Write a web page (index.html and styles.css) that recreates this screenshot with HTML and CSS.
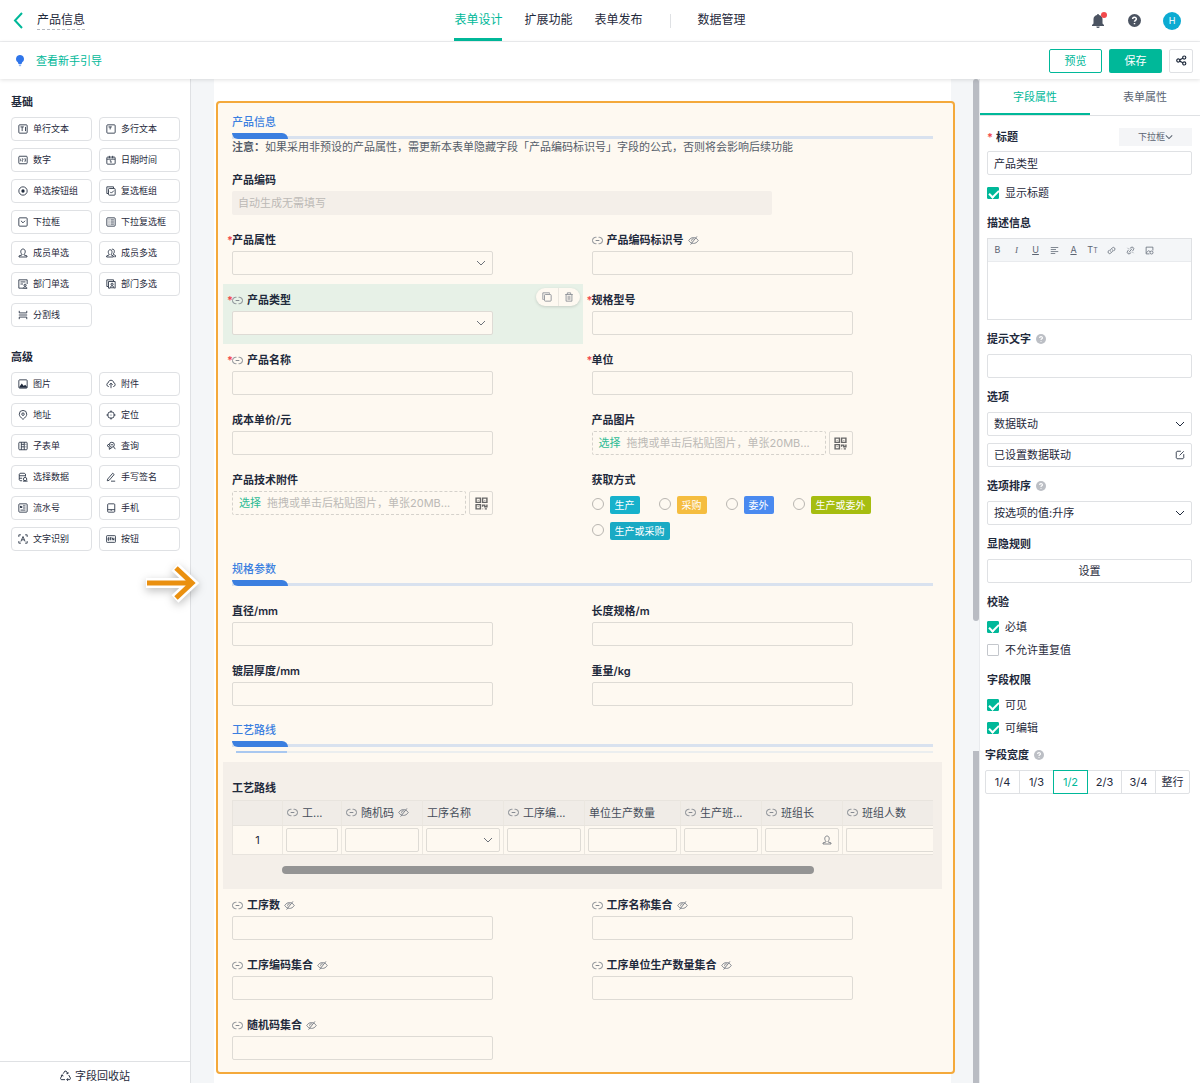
FILE: index.html
```
<!DOCTYPE html>
<html lang="zh-CN">
<head>
    <meta charset="UTF-8">
    <meta name="viewport" content="width=device-width, initial-scale=1.0">
    <title>产品信息 - 表单设计</title>
    <link rel="stylesheet" href="styles.css">
</head>
<body>
    <!-- icon sprite -->
    <svg class="sprite" aria-hidden="true">
        <symbol id="i-chevron" viewBox="0 0 10 10"><path d="M1 3l4 4 4-4"/></symbol>
        <symbol id="i-link" viewBox="0 0 12 12"><path d="M4.8 2.5H4a3.5 3.5 0 0 0 0 7h.8M7.2 2.5H8a3.5 3.5 0 0 1 0 7h-.8M4 6h4"/></symbol>
        <symbol id="i-hidden" viewBox="0 0 12 12"><path d="M.8 6C2.2 3.800 4 2.800 6 2.800s3.800 1 5.200 3.200C9.800 8.200 8 9.200 6 9.200S2.200 8.200.8 6zM9.800 1.500L2.800 10.500M6.800 4.500A1.700 1.700 0 0 0 4.500 7"/></symbol>
        <symbol id="i-text" viewBox="0 0 12 12"><rect x="1" y="1" width="10" height="10" rx="1"/><path d="M3 3.500h4M5 3.500v5M9 3.500v5"/></symbol>
        <symbol id="i-textarea" viewBox="0 0 12 12"><rect x="1" y="1" width="10" height="10" rx="1"/><path d="M3 3.500h4M5 3.500v3"/></symbol>
        <symbol id="i-number" viewBox="0 0 12 12"><rect x="1" y="1.500" width="10" height="9" rx="1"/><path d="M3 4.500v3M4.500 4.500H6V6H4.800v1.500H6M7.500 4.500H9v3H7.500M8 6h1" stroke-width=".7"/></symbol>
        <symbol id="i-date" viewBox="0 0 12 12"><rect x="1" y="2.500" width="10" height="8.500" rx="1"/><path d="M4 1v3M8 1v3M1 5h10M4.500 7H6v2.500"/></symbol>
        <symbol id="i-radio" viewBox="0 0 12 12"><circle cx="6" cy="6" r="5"/><circle cx="6" cy="6" r="2" class="solid"/></symbol>
        <symbol id="i-checks" viewBox="0 0 12 12"><path d="M2.500 9H1V1h8v1.500"/><rect x="3" y="3" width="8" height="8" rx="1"/><path d="M5 7l1.500 1.500 3-3"/></symbol>
        <symbol id="i-select" viewBox="0 0 12 12"><rect x="1" y="1" width="10" height="10" rx="1"/><path d="M3.500 4.500L6 7l2.500-2.500"/></symbol>
        <symbol id="i-multi" viewBox="0 0 12 12"><rect x="1" y="1" width="10" height="10" rx="1"/><path d="M3 3.500h1.200M5.500 3.500h4M3 6h1.200M5.500 6h4M3 8.500h1.200M5.500 8.500h4"/></symbol>
        <symbol id="i-user" viewBox="0 0 12 12"><path d="M4.800 7.500C3.500 6.500 3.200 5 3.400 3.600 3.700 2 4.700 1.200 6 1.200s2.300.8 2.600 2.400c.2 1.400-.1 2.900-1.400 3.900v.8l3.600 1.200v1.300H1.200V9.500l3.600-1.200z"/></symbol>
        <symbol id="i-users" viewBox="0 0 12 12"><path d="M3.800 7.500C2.500 6.500 2.500 4 3.200 3 4 1.800 6 1.800 6.800 3c.7 1 .5 3.500-.6 4.500v.8l2.600 1.200v1.300H.8V9.500l3-1.200zM7 1.500c2-.6 3 .8 3 2.500 0 1.300-.3 2.300-1.200 3v.7L11.400 9v1.500H10"/></symbol>
        <symbol id="i-dept" viewBox="0 0 12 12"><path d="M6 11H1V1h10v5M3 3.500h6M3 6h3"/><circle cx="8.500" cy="7.500" r="1.300"/><path d="M6.200 11.200c.3-2.400 4.300-2.400 4.600 0z"/></symbol>
        <symbol id="i-depts" viewBox="0 0 12 12"><path d="M2.500 9H1V1h8v1.500"/><path d="M5 11H3V3h8v8h-1"/><circle cx="7.300" cy="6.300" r="1.300"/><path d="M5 10.500c.3-3 4.300-3 4.600 0z"/></symbol>
        <symbol id="i-divider" viewBox="0 0 12 12"><path d="M1 6h10M1.500 1v2.500h9V1M1.500 11V8.500h9V11"/></symbol>
        <symbol id="i-image" viewBox="0 0 12 12"><rect x="1" y="1" width="10" height="10" rx="1"/><path class="solid" d="M1.500 9.500l3-4L7 8.500 8.500 7 11 9.500v1H1.500z"/></symbol>
        <symbol id="i-upload" viewBox="0 0 12 12"><path d="M3.500 9H3a2.300 2.300 0 0 1-.3-4.500C3 2.500 4.300 1.500 6 1.500s3 1 3.300 3A2.300 2.300 0 0 1 9 9h-.5M6 11V5M4 7l2-2 2 2"/></symbol>
        <symbol id="i-pin" viewBox="0 0 12 12"><path d="M6 11.300C3.300 9 1.500 7 1.500 5a4.500 4.500 0 0 1 9 0c0 2-1.800 4-4.500 6.300z"/><circle cx="6" cy="5" r="1.500"/></symbol>
        <symbol id="i-target" viewBox="0 0 12 12"><circle cx="6" cy="6" r="4"/><path d="M6 .5V3M6 9v2.500M.5 6H3M9 6h2.500"/><circle cx="6" cy="6" r=".6" class="solid"/></symbol>
        <symbol id="i-subform" viewBox="0 0 12 12"><rect x="1" y="1.500" width="10" height="9" rx="1"/><path d="M4 1.500v9M7.500 1.500v9M4 4h3.500M4 7h3.500M9 4h1M9 7h1"/></symbol>
        <symbol id="i-query" viewBox="0 0 12 12"><circle cx="7" cy="4.500" r="3"/><path d="M9 6.800l2.200 3M4 3.500L1.200 5.500 4 7.500V10l3-2M5.500 4.500h3"/></symbol>
        <symbol id="i-data" viewBox="0 0 12 12"><path d="M5 10.500H2.500l-1-1v-7l1-1h5l1.500 1v3M1.500 4.500h7M1.500 7.500H5"/><circle cx="8.500" cy="8.500" r="2"/><path d="M6 11h5.500"/></symbol>
        <symbol id="i-sign" viewBox="0 0 12 12"><path d="M2 8.500l6-7L9.800 3l-6 7-2.300.5zM6 11h5"/></symbol>
        <symbol id="i-serial" viewBox="0 0 12 12"><rect x="1" y="1" width="10" height="10" rx="1"/><path d="M3 6V3.500L4.500 6V3.500M6 3.500h3M6 6h3M3 8.500h6"/></symbol>
        <symbol id="i-phone" viewBox="0 0 12 12"><rect x="2" y="1" width="8.500" height="10" rx="1"/><path d="M2 8h8.500M6.200 8v1.500"/></symbol>
        <symbol id="i-ocr" viewBox="0 0 12 12"><path d="M3.500 1H1v2.500M8.500 1H11v2.500M3.500 11H1V8.500M8.500 11H11V8.500M3.500 9L6 3l2.500 6M4.500 7h3"/></symbol>
        <symbol id="i-button" viewBox="0 0 12 12"><rect x=".5" y="2" width="11" height="8" rx="1"/><path d="M2.500 4.500v3h1v-3zM4.500 4.500h2M5.500 4.500v3M7.500 7.500v-3l2 3v-3"/></symbol>
        <symbol id="i-qr" viewBox="0 0 12 12"><path d="M1 1h4v4H1zM7 1h4v4H7zM1 7h4v4H1zM3 2.700v.6M9 2.700v.6M3 8.700v.6M7 9V7.500h2V9h2V7M7 11h.5M9 11h2"/></symbol>
        <symbol id="i-copy" viewBox="0 0 12 12"><path d="M2 9H1V1h8v1"/><rect x="3" y="3" width="8" height="8" rx="1"/></symbol>
        <symbol id="i-trash" viewBox="0 0 12 12"><path d="M1.500 3h9M4 3V1h4v2M2.500 3v8h7V3M5 4.500v5M7 4.500v5"/></symbol>
        <symbol id="i-help" viewBox="0 0 12 12"><circle cx="6" cy="6" r="6" class="solid"/><path class="mark" d="M4.300 4.700c0-2.200 3.400-2.200 3.400 0C7.700 5.800 6 5.800 6 7.200M6 8.400v1"/></symbol>
    </svg>

    <div class="app">
        <header class="topbar">
            <div class="topbar-left">
                <button class="back" aria-label="返回"><svg viewBox="0 0 10 17"><path d="M8.500 1L1.500 8.500l7 7.500"/></svg></button>
                <span class="form-name">产品信息</span>
            </div>
            <nav class="main-nav">
                <a href="#" class="active">表单设计</a>
                <a href="#">扩展功能</a>
                <a href="#">表单发布</a>
                <span class="nav-divider"></span>
                <a href="#">数据管理</a>
            </nav>
            <div class="topbar-right">
                <button class="bell" aria-label="通知">
                    <svg viewBox="0 0 12 14"><path d="M6 0a1 1 0 0 1 1 1c2 .4 3.500 2 3.500 4v4.500L12 11v1H0v-1l1.500-1.500V5C1.500 3 3 1.400 5 1a1 1 0 0 1 1-1zM4.300 12.500h3.400a1.700 1.500 0 0 1-3.400 0z"/></svg>
                    <span class="bell-dot"></span>
                </button>
                <button class="help-btn" aria-label="帮助"><svg class="icon"><use href="#i-help"/></svg></button>
                <span class="avatar">H</span>
            </div>
        </header>

        <div class="toolbar">
            <svg class="bulb" viewBox="0 0 8 12"><path d="M4 0a4 4 0 0 1 2.200 7.300L5.500 9h-3l-.7-1.700A4 4 0 0 1 4 0z"/><path class="base" d="M2.800 9.500h2.400v1L4 11.500l-1.200-1z"/></svg>
            <a href="#" class="guide">查看新手引导</a>
            <button class="btn btn-outline">预览</button>
            <button class="btn btn-primary">保存</button>
            <button class="btn btn-icon" aria-label="分享"><svg viewBox="0 0 12 12"><circle cx="2.500" cy="6" r="1.700"/><circle cx="9" cy="2.800" r="1.700"/><circle cx="9" cy="9.200" r="1.700"/><path d="M4 5.300l3.500-1.700M4 6.700l3.500 1.700"/></svg></button>
        </div>

        <div class="workspace">
            <aside class="palette">
                <div class="palette-body">
                    <h2>基础</h2>
                    <div class="widgets">
                        <button><svg class="icon"><use href="#i-text"/></svg>单行文本</button>
                        <button><svg class="icon"><use href="#i-textarea"/></svg>多行文本</button>
                        <button><svg class="icon"><use href="#i-number"/></svg>数字</button>
                        <button><svg class="icon"><use href="#i-date"/></svg>日期时间</button>
                        <button><svg class="icon"><use href="#i-radio"/></svg>单选按钮组</button>
                        <button><svg class="icon"><use href="#i-checks"/></svg>复选框组</button>
                        <button><svg class="icon"><use href="#i-select"/></svg>下拉框</button>
                        <button><svg class="icon"><use href="#i-multi"/></svg>下拉复选框</button>
                        <button><svg class="icon"><use href="#i-user"/></svg>成员单选</button>
                        <button><svg class="icon"><use href="#i-users"/></svg>成员多选</button>
                        <button><svg class="icon"><use href="#i-dept"/></svg>部门单选</button>
                        <button><svg class="icon"><use href="#i-depts"/></svg>部门多选</button>
                        <button><svg class="icon"><use href="#i-divider"/></svg>分割线</button>
                    </div>
                    <h2>高级</h2>
                    <div class="widgets">
                        <button><svg class="icon"><use href="#i-image"/></svg>图片</button>
                        <button><svg class="icon"><use href="#i-upload"/></svg>附件</button>
                        <button><svg class="icon"><use href="#i-pin"/></svg>地址</button>
                        <button><svg class="icon"><use href="#i-target"/></svg>定位</button>
                        <button><svg class="icon"><use href="#i-subform"/></svg>子表单</button>
                        <button><svg class="icon"><use href="#i-query"/></svg>查询</button>
                        <button><svg class="icon"><use href="#i-data"/></svg>选择数据</button>
                        <button><svg class="icon"><use href="#i-sign"/></svg>手写签名</button>
                        <button><svg class="icon"><use href="#i-serial"/></svg>流水号</button>
                        <button><svg class="icon"><use href="#i-phone"/></svg>手机</button>
                        <button><svg class="icon"><use href="#i-ocr"/></svg>文字识别</button>
                        <button><svg class="icon"><use href="#i-button"/></svg>按钮</button>
                    </div>
                </div>
                <button class="recycle">
                    <svg class="icon" viewBox="0 0 12 12"><path d="M3.500 4l1.800-2.800h1.400L8.500 4M7 4h1.700V2.300M9.500 5.500l2 3.500-.8 1.500H7.500M8.700 9l-1.400 1.500 1.400 1.200M5.500 10.500H1.300L.5 9l2-3.500M1 6l1.700-.7.6 1.700"/></svg>字段回收站
                </button>
                <svg class="pointer" viewBox="0 0 56 44"><path class="halo" d="M2 22h46M31 6l17 16-17 16"/><path d="M3 22h45M32 7l16 15-16 15"/></svg>
            </aside>

            <main class="canvas">
                <div class="page">
                    <form class="form-frame">
                        <div class="section">
                            <h3>产品信息</h3>
                            <div class="section-bar"></div>
                        </div>
                        <p class="note"><b>注意：</b>如果采用非预设的产品属性，需更新本表单隐藏字段「产品编码标识号」字段的公式，否则将会影响后续功能</p>

                        <div class="fields">
                            <div class="field wide">
                                <label for="f-code">产品编码</label>
                                <input id="f-code" class="control disabled" placeholder="自动生成无需填写" disabled>
                            </div>
                            <div class="field required">
                                <label for="f-attr">产品属性</label>
                                <div class="select"><select id="f-attr" class="control"><option></option></select><svg class="icon"><use href="#i-chevron"/></svg></div>
                            </div>
                            <div class="field">
                                <label for="f-mark"><svg class="icon"><use href="#i-link"/></svg>产品编码标识号<svg class="icon"><use href="#i-hidden"/></svg></label>
                                <input id="f-mark" class="control">
                            </div>
                            <div class="field required selected">
                                <label for="f-type"><svg class="icon"><use href="#i-link"/></svg>产品类型</label>
                                <div class="select"><select id="f-type" class="control"><option></option></select><svg class="icon"><use href="#i-chevron"/></svg></div>
                                <div class="field-tools">
                                    <button type="button" aria-label="复制"><svg class="icon"><use href="#i-copy"/></svg></button>
                                    <button type="button" aria-label="删除"><svg class="icon"><use href="#i-trash"/></svg></button>
                                </div>
                            </div>
                            <div class="field required">
                                <label for="f-model">规格型号</label>
                                <input id="f-model" class="control">
                            </div>
                            <div class="field required">
                                <label for="f-name"><svg class="icon"><use href="#i-link"/></svg>产品名称</label>
                                <input id="f-name" class="control">
                            </div>
                            <div class="field required">
                                <label for="f-unit">单位</label>
                                <input id="f-unit" class="control">
                            </div>
                            <div class="field">
                                <label for="f-cost">成本单价/元</label>
                                <input id="f-cost" class="control">
                            </div>
                            <div class="field">
                                <label for="f-photo">产品图片</label>
                                <div class="upload">
                                    <button type="button" id="f-photo" class="drop"><span>选择</span>拖拽或单击后粘贴图片，单张20MB...</button>
                                    <button type="button" class="qr" aria-label="扫码上传"><svg class="icon"><use href="#i-qr"/></svg></button>
                                </div>
                            </div>
                            <div class="field">
                                <label for="f-file">产品技术附件</label>
                                <div class="upload">
                                    <button type="button" id="f-file" class="drop"><span>选择</span>拖拽或单击后粘贴图片，单张20MB...</button>
                                    <button type="button" class="qr" aria-label="扫码上传"><svg class="icon"><use href="#i-qr"/></svg></button>
                                </div>
                            </div>
                            <div class="field" role="radiogroup" aria-labelledby="way-label">
                                <span class="label" id="way-label">获取方式</span>
                                <div class="choices">
                                    <label><input type="radio" name="way"><span class="tag cyan">生产</span></label>
                                    <label><input type="radio" name="way"><span class="tag yellow">采购</span></label>
                                    <label><input type="radio" name="way"><span class="tag blue">委外</span></label>
                                    <label><input type="radio" name="way"><span class="tag lime">生产或委外</span></label>
                                    <label><input type="radio" name="way"><span class="tag teal">生产或采购</span></label>
                                </div>
                            </div>
                        </div>

                        <div class="section spaced">
                            <h3>规格参数</h3>
                            <div class="section-bar"></div>
                        </div>
                        <div class="fields">
                            <div class="field">
                                <label for="f-dia">直径/mm</label>
                                <input id="f-dia" class="control">
                            </div>
                            <div class="field">
                                <label for="f-len">长度规格/m</label>
                                <input id="f-len" class="control">
                            </div>
                            <div class="field">
                                <label for="f-coat">镀层厚度/mm</label>
                                <input id="f-coat" class="control">
                            </div>
                            <div class="field">
                                <label for="f-weight">重量/kg</label>
                                <input id="f-weight" class="control">
                            </div>
                        </div>

                        <div class="section">
                            <h3>工艺路线</h3>
                            <div class="section-bar"></div>
                            <div class="section-shade"></div>
                        </div>
                        <div class="subform">
                            <h4>工艺路线</h4>
                            <div class="table-wrap">
                                <table>
                                    <colgroup>
                                        <col class="c-index"><col class="c-small"><col class="c-mid"><col class="c-mid"><col class="c-mid"><col class="c-large"><col class="c-mid"><col class="c-mid"><col>
                                    </colgroup>
                                    <thead>
                                        <tr>
                                            <th></th>
                                            <th><svg class="icon"><use href="#i-link"/></svg>工...</th>
                                            <th><svg class="icon"><use href="#i-link"/></svg>随机码<svg class="icon"><use href="#i-hidden"/></svg></th>
                                            <th>工序名称</th>
                                            <th><svg class="icon"><use href="#i-link"/></svg>工序编...</th>
                                            <th>单位生产数量</th>
                                            <th><svg class="icon"><use href="#i-link"/></svg>生产班...</th>
                                            <th><svg class="icon"><use href="#i-link"/></svg>班组长</th>
                                            <th><svg class="icon"><use href="#i-link"/></svg>班组人数</th>
                                        </tr>
                                    </thead>
                                    <tbody>
                                        <tr>
                                            <td class="index">1</td>
                                            <td><input class="control" aria-label="工序"></td>
                                            <td><input class="control" aria-label="随机码"></td>
                                            <td><div class="select"><select class="control" aria-label="工序名称"><option></option></select><svg class="icon"><use href="#i-chevron"/></svg></div></td>
                                            <td><input class="control" aria-label="工序编码"></td>
                                            <td><input class="control" aria-label="单位生产数量"></td>
                                            <td><input class="control" aria-label="生产班组"></td>
                                            <td><div class="select"><input class="control" aria-label="班组长"><svg class="icon"><use href="#i-user"/></svg></div></td>
                                            <td class="last"><input class="control" aria-label="班组人数"></td>
                                        </tr>
                                    </tbody>
                                </table>
                            </div>
                            <div class="h-scroll"><div class="h-thumb"></div></div>
                        </div>

                        <div class="fields">
                            <div class="field">
                                <label for="f-steps"><svg class="icon"><use href="#i-link"/></svg>工序数<svg class="icon"><use href="#i-hidden"/></svg></label>
                                <input id="f-steps" class="control">
                            </div>
                            <div class="field">
                                <label for="f-step-names"><svg class="icon"><use href="#i-link"/></svg>工序名称集合<svg class="icon"><use href="#i-hidden"/></svg></label>
                                <input id="f-step-names" class="control">
                            </div>
                            <div class="field">
                                <label for="f-step-codes"><svg class="icon"><use href="#i-link"/></svg>工序编码集合<svg class="icon"><use href="#i-hidden"/></svg></label>
                                <input id="f-step-codes" class="control">
                            </div>
                            <div class="field">
                                <label for="f-step-units"><svg class="icon"><use href="#i-link"/></svg>工序单位生产数量集合<svg class="icon"><use href="#i-hidden"/></svg></label>
                                <input id="f-step-units" class="control">
                            </div>
                            <div class="field">
                                <label for="f-random"><svg class="icon"><use href="#i-link"/></svg>随机码集合<svg class="icon"><use href="#i-hidden"/></svg></label>
                                <input id="f-random" class="control">
                            </div>
                        </div>
                    </form>
                </div>
                <div class="v-scroll">
                    <div class="v-thumb top"></div>
                    <div class="v-thumb bottom"></div>
                </div>
            </main>

            <aside class="props">
                <div class="tabs">
                    <button class="active">字段属性</button>
                    <button>表单属性</button>
                </div>
                <div class="props-body">
                    <div class="prop title-prop">
                        <div class="prop-head">
                            <label for="p-title"><i>*</i> 标题</label>
                            <button class="type-btn">下拉框<svg class="icon"><use href="#i-chevron"/></svg></button>
                        </div>
                        <input id="p-title" class="control" value="产品类型">
                        <label class="check"><input type="checkbox" checked>显示标题</label>
                    </div>
                    <div class="prop">
                        <label for="p-desc">描述信息</label>
                        <div class="editor">
                            <div class="editor-bar">
                                <button aria-label="加粗">B</button>
                                <button aria-label="斜体" class="italic">I</button>
                                <button aria-label="下划线" class="underline">U</button>
                                <button aria-label="对齐"><svg class="icon" viewBox="0 0 12 12"><path d="M1 2h10M1 4.700h7M1 7.400h10M1 10h6"/></svg></button>
                                <button aria-label="颜色" class="underline">A</button>
                                <button aria-label="字号" class="size">T<small>T</small></button>
                                <button aria-label="链接"><svg class="icon" viewBox="0 0 12 12"><path d="M5 7.500a2 2 0 0 1 0-3l2-2a2 2 0 0 1 3 3L8.500 7M7 4.500a2 2 0 0 1 0 3l-2 2a2 2 0 0 1-3-3L3.500 5"/></svg></button>
                                <button aria-label="取消链接"><svg class="icon" viewBox="0 0 12 12"><path d="M5 3.500l1.500-1.300a2 2 0 0 1 3.300 3L8.500 7M7 8.500L5.500 9.800a2 2 0 0 1-3.300-3L3.500 5M4 8.500l4-5M2 2.500l1 1M10 9.500l-1-1"/></svg></button>
                                <button aria-label="图片"><svg class="icon" viewBox="0 0 12 12"><path d="M6 10.500H1.500v-9h9V6M2 9l3-3 2 2"/><circle cx="8.700" cy="8.700" r="2"/></svg></button>
                            </div>
                            <textarea id="p-desc"></textarea>
                        </div>
                    </div>
                    <div class="prop">
                        <label for="p-hint">提示文字<svg class="icon help"><use href="#i-help"/></svg></label>
                        <input id="p-hint" class="control">
                    </div>
                    <div class="prop">
                        <label for="p-options">选项</label>
                        <div class="select"><select id="p-options" class="control"><option>数据联动</option></select><svg class="icon"><use href="#i-chevron"/></svg></div>
                        <button class="control linked">已设置数据联动<svg class="icon" viewBox="0 0 12 12"><path d="M7 1.500H2.500l-1 1v7l1 1h7l1-1V5M5.500 6.500l5-5"/></svg></button>
                    </div>
                    <div class="prop">
                        <label for="p-sort">选项排序<svg class="icon help"><use href="#i-help"/></svg></label>
                        <div class="select"><select id="p-sort" class="control"><option>按选项的值:升序</option></select><svg class="icon"><use href="#i-chevron"/></svg></div>
                    </div>
                    <div class="prop">
                        <label for="p-rule">显隐规则</label>
                        <button id="p-rule" class="control">设置</button>
                    </div>
                    <div class="prop check-prop">
                        <span class="label">校验</span>
                        <label class="check"><input type="checkbox" checked>必填</label>
                        <label class="check"><input type="checkbox">不允许重复值</label>
                    </div>
                    <div class="prop check-prop">
                        <span class="label">字段权限</span>
                        <label class="check"><input type="checkbox" checked>可见</label>
                        <label class="check"><input type="checkbox" checked>可编辑</label>
                    </div>
                    <div class="prop width-prop">
                        <span class="label">字段宽度<svg class="icon help"><use href="#i-help"/></svg></span>
                        <div class="segments">
                            <button>1/4</button>
                            <button>1/3</button>
                            <button class="active">1/2</button>
                            <button>2/3</button>
                            <button>3/4</button>
                            <button>整行</button>
                        </div>
                    </div>
                </div>
            </aside>
        </div>
    </div>
</body>
</html>
```
FILE: styles.css
```
:root {
    --green: #00b899;
    --text: #1f2a3c;
    --muted: #5b6472;
    --line: #dfe1e4;
    --form-bg: #fef9f1;
    --form-line: #dedbd5;
    --orange: #f4a93b;
    --blue: #3b7fe0;
}

* {
    margin: 0;
    padding: 0;
    box-sizing: border-box;
}

body {
    font-family: Inter, "Noto Sans CJK SC", sans-serif;
    font-size: 11px;
    line-height: 16px;
    color: var(--text);
    background: #fff;
}

button, input, select, textarea {
    font: inherit;
    color: inherit;
    background: none;
    border: none;
    outline: none;
}

button {
    cursor: pointer;
}

a {
    color: inherit;
    text-decoration: none;
}

h2, h3, h4 {
    font-size: 11px;
}

.sprite {
    display: none;
}

svg {
    flex-shrink: 0;
    fill: none;
    stroke: currentColor;
}

.icon {
    width: 10px;
    height: 10px;
}

.solid {
    fill: currentColor;
    stroke: none;
}

.mark {
    stroke: #fff;
    stroke-width: 1.4;
}

.app {
    display: flex;
    flex-direction: column;
    height: 100vh;
    overflow: hidden;
}

/* Top bar */
.topbar {
    display: grid;
    grid-template-columns: 1fr auto 1fr;
    align-items: center;
    height: 42px;
    padding: 0 13px;
    border-bottom: 1px solid #eeeff1;
    flex-shrink: 0;
    font-size: 12px;
}

.topbar-left {
    display: flex;
    align-items: center;
    gap: 13px;
}

.back {
    display: flex;
}

.back svg {
    width: 11px;
    height: 17px;
    color: var(--green);
    stroke-width: 2;
}

.form-name {
    border-bottom: 1px dashed #b5b9c0;
    line-height: 18px;
}

.main-nav {
    display: flex;
    align-items: center;
    gap: 22px;
    height: 41px;
}

.main-nav a {
    height: 41px;
    line-height: 40px;
}

.main-nav a.active {
    color: var(--green);
    border-bottom: 3px solid var(--green);
}

.nav-divider {
    width: 1px;
    height: 14px;
    margin: 0 5px;
    background: var(--line);
}

.topbar-right {
    display: flex;
    justify-content: flex-end;
    align-items: center;
    gap: 22px;
    padding-right: 6px;
    color: #4b5361;
}

.bell {
    position: relative;
    display: flex;
    margin-right: 2px;
}

.bell svg {
    width: 12px;
    height: 14px;
    fill: currentColor;
    stroke: none;
}

.bell-dot {
    position: absolute;
    top: -2px;
    right: -3px;
    width: 6px;
    height: 6px;
    border-radius: 50%;
    background: #f2494c;
}

.help-btn {
    display: flex;
}

.help-btn .icon {
    width: 13px;
    height: 13px;
}

.avatar {
    width: 18px;
    line-height: 18px;
    border-radius: 50%;
    background: #0cabd2;
    color: #fff;
    font-size: 9px;
    text-align: center;
}

/* Toolbar */
.toolbar {
    position: relative;
    z-index: 1;
    display: flex;
    align-items: center;
    gap: 7px;
    height: 37px;
    padding: 0 7px 0 16px;
    flex-shrink: 0;
    background: #fff;
    box-shadow: 0 1px 4px rgba(0, 0, 0, 0.12);
}

.bulb {
    width: 8px;
    height: 12px;
    fill: #2f75ea;
    stroke: none;
}

.bulb .base {
    fill: #8bb4f7;
}

.guide {
    margin-left: 5px;
    margin-right: auto;
    color: var(--green);
}

.btn {
    display: flex;
    justify-content: center;
    align-items: center;
    width: 53px;
    height: 24px;
    border-radius: 2px;
}

.btn-outline {
    border: 1px solid var(--green);
    color: var(--green);
}

.btn-primary {
    background: var(--green);
    color: #fff;
}

.btn-icon {
    width: 24px;
    border: 1px solid var(--line);
}

.btn-icon svg {
    width: 11px;
    height: 11px;
    stroke-width: 1.3;
}

.workspace {
    display: flex;
    flex: 1;
    min-height: 0;
}

/* Widget palette */
.palette {
    position: relative;
    display: flex;
    flex-direction: column;
    width: 191px;
    flex-shrink: 0;
    border-right: 1px solid var(--line);
}

.palette-body {
    flex: 1;
    min-height: 0;
    padding: 15px 10px 0 11px;
}

.palette h2 {
    margin-bottom: 7px;
}

.widgets {
    display: grid;
    grid-template-columns: 1fr 1fr;
    gap: 7px;
    margin-bottom: 22px;
}

.widgets button {
    display: flex;
    align-items: center;
    gap: 5px;
    height: 24px;
    padding-left: 6px;
    border: 1px solid var(--line);
    border-radius: 4px;
    font-size: 9px;
}

.recycle {
    display: flex;
    justify-content: center;
    align-items: center;
    gap: 4px;
    height: 22px;
    padding-top: 6px;
    border-top: 1px solid var(--line);
}

.recycle .icon {
    width: 11px;
    height: 11px;
}

.pointer {
    position: absolute;
    z-index: 2;
    top: 482px;
    left: 144px;
    width: 56px;
    height: 44px;
    stroke: #ea9010;
    stroke-width: 5;
    filter: drop-shadow(0 3px 4px rgba(0, 0, 0, 0.25));
}

.pointer .halo {
    stroke: #fff;
    stroke-width: 10;
}

/* Form canvas */
.canvas {
    display: flex;
    flex: 1;
    min-width: 0;
    padding-left: 23px;
    background: #f4f6f8;
}

.page {
    flex: 1;
    min-width: 0;
    margin-right: 22px;
    padding-top: 22px;
    background: #fff;
}

.form-frame {
    margin: 0 -4px 0 2px;
    padding: 4px 11px 3px 5px;
    border: 2px solid var(--orange);
    border-radius: 4px;
    background: var(--form-bg);
}

.section {
    padding: 7px 9px 0;
}

.section.spaced {
    margin-bottom: 9px;
}

.section h3 {
    margin-bottom: 3px;
    color: var(--blue);
    font-weight: 500;
}

.section-bar {
    height: 6px;
    border-bottom: 3px solid #d9e2ef;
}

.section-bar::before {
    content: "";
    display: block;
    width: 56px;
    height: 6px;
    border-radius: 0 6px 0 6px;
    background: var(--blue);
}

/* edge of the bar that shows below the fold */
.section-shade {
    height: 2px;
    margin: 4px 0 9px 4px;
    background: linear-gradient(to right, #a9c8f0 51px, #ebeeef 51px);
}

.note {
    padding: 0 9px 9px;
    color: #555d69;
}

.fields {
    display: grid;
    grid-template-columns: 1fr 1fr;
}

.field {
    position: relative;
    padding: 9px;
}

.field.wide {
    grid-column: 1 / -1;
}

.field > label,
.field > .label {
    position: relative;
    display: flex;
    align-items: center;
    gap: 4px;
    width: fit-content;
    height: 14px;
    margin-bottom: 4px;
    font-weight: 600;
}

.field > label .icon {
    width: 11px;
    height: 11px;
    color: #7b8089;
}

.field.required > label::before {
    content: "*";
    position: absolute;
    left: -5px;
    color: #f2494c;
}

.field.selected {
    background: #e7f1e7;
}

.control {
    display: block;
    width: 100%;
    height: 24px;
    padding: 0 6px;
    border: 1px solid var(--line);
    border-radius: 2px;
}

select {
    appearance: none;
}

.select {
    position: relative;
}

.select .icon {
    position: absolute;
    top: 7px;
    right: 7px;
    pointer-events: none;
}

.form-frame .control {
    border-color: var(--form-line);
    background: var(--form-bg);
}

.form-frame .select .icon {
    color: #6d727a;
}

.field > .control,
.field > .select,
.field > .upload {
    width: 76.5%;
}

.field.wide > .control {
    width: 77%;
}

.form-frame .control.disabled {
    border: none;
    background: #f4efe9;
}

.control::placeholder {
    color: #bcb9b6;
}

.field-tools {
    position: absolute;
    top: 4px;
    right: 3px;
    display: flex;
    border-radius: 9px;
    background: var(--form-bg);
    box-shadow: 0 1px 3px rgba(0, 0, 0, 0.15);
    color: #858a92;
}

.field-tools button {
    display: flex;
    justify-content: center;
    align-items: center;
    width: 22px;
    height: 18px;
}

.field-tools button + button {
    border-left: 1px solid #ebe7e0;
}

.upload {
    display: flex;
    gap: 3px;
}

.drop {
    flex: 1;
    min-width: 0;
    height: 24px;
    padding: 0 6px;
    border: 1px dashed #d5d2cc;
    border-radius: 2px;
    color: #bcb9b6;
    text-align: left;
    white-space: nowrap;
    overflow: hidden;
}

.drop span {
    margin-right: 6px;
    color: #2dbb94;
}

.qr {
    display: flex;
    justify-content: center;
    align-items: center;
    width: 24px;
    height: 24px;
    border: 1px solid var(--form-line);
    border-radius: 2px;
    color: #666;
}

.qr .icon {
    width: 13px;
    height: 13px;
    stroke-width: 1.3;
}

.choices {
    display: flex;
    flex-wrap: wrap;
    align-content: flex-start;
    gap: 8px 19px;
    min-height: 54px;
    padding-top: 5px;
}

.choices label {
    display: flex;
    align-items: flex-start;
    gap: 6px;
}

.choices input {
    appearance: none;
    width: 12px;
    height: 12px;
    margin-top: 2px;
    border: 1px solid #b9b6b1;
    border-radius: 50%;
}

.tag {
    padding: 0 5px;
    border-radius: 2px;
    line-height: 18px;
    color: #fff;
    font-size: 10px;
}

.tag.cyan { background: #17b1cb; }
.tag.yellow { background: #f5bd3f; }
.tag.blue { background: #4a8af0; }
.tag.lime { background: #a6bd10; }
.tag.teal { background: #1aaac4; }

/* Subform */
.subform {
    padding: 18px 9px 15px;
    background: #f4efe9;
}

.subform h4 {
    margin-bottom: 4px;
}

.table-wrap {
    overflow: hidden;
}

table {
    width: 100%;
    table-layout: fixed;
    border-collapse: collapse;
}

.c-index { width: 50px; }
.c-small { width: 59px; }
.c-mid { width: 81px; }
.c-large { width: 96px; }

th, td {
    border: 1px solid #e8e4de;
    border-right-color: #ebe7e0;
}

th {
    height: 25px;
    padding: 0 4px;
    background: #f0ece7;
    color: #454d5a;
    font-weight: 400;
    text-align: left;
    white-space: nowrap;
}

th .icon {
    width: 11px;
    height: 11px;
    vertical-align: -1px;
    color: #7b8089;
}

th .icon:first-child {
    margin-right: 4px;
}

th .icon:last-child:not(:first-child) {
    margin-left: 4px;
}

td {
    height: 29px;
    padding: 0 3px;
    background: var(--form-bg);
}

td.index {
    text-align: center;
}

/* last column runs on past the visible part */
td.last {
    padding-right: 0;
    border-right: none;
}

td.last .control {
    border-right: none;
    border-radius: 2px 0 0 2px;
}

th:last-child {
    border-right: none;
}

.h-scroll {
    padding: 11px 0 0 50px;
}

.h-thumb {
    width: 532px;
    max-width: 100%;
    height: 8px;
    border-radius: 4px;
    background: #949494;
}

.v-scroll {
    display: flex;
    flex-direction: column;
    width: 6px;
}

.v-thumb {
    background: #b9bcc3;
}

.v-thumb.top {
    height: 54%;
    margin-bottom: 130px;
    border-radius: 3px;
}

.v-thumb.bottom {
    flex: 1;
}

/* Properties panel */
.props {
    width: 221px;
    flex-shrink: 0;
    border-left: 1px solid #e9ebee;
    background: #fff;
}

.tabs {
    display: flex;
    height: 37px;
    border-bottom: 1px solid var(--line);
}

.tabs button {
    flex: 1;
    padding-top: 2px;
    border-bottom: 2px solid transparent;
    color: var(--muted);
}

.tabs button.active {
    color: var(--green);
    border-bottom-color: var(--green);
}

.props-body {
    display: flex;
    flex-direction: column;
    gap: 11px;
    padding: 12px 8px 0 7px;
}

.prop {
    display: flex;
    flex-direction: column;
    gap: 7px;
}

.prop > label:not(.check),
.prop > .label,
.prop-head label {
    display: flex;
    align-items: center;
    gap: 5px;
    font-weight: 600;
}

.prop-head {
    display: flex;
    justify-content: space-between;
    align-items: center;
    height: 18px;
    margin-bottom: -2px;
}

.prop-head i {
    margin-right: -2px;
    color: #f2494c;
    font-style: normal;
}

.type-btn {
    display: flex;
    justify-content: center;
    align-items: center;
    width: 73px;
    height: 18px;
    background: #f4f5f7;
    color: var(--muted);
    font-size: 9px;
}

.type-btn .icon {
    width: 8px;
    height: 8px;
    stroke-width: 1.3;
}

.help {
    color: #bcbfc5;
}

.check {
    display: flex;
    align-items: center;
    gap: 6px;
}

.title-prop {
    margin-bottom: 3px;
}

.title-prop .check {
    margin-top: 3px;
}

.check-prop {
    margin-bottom: 3px;
}

.check-prop .label {
    margin-bottom: 2px;
}

.check input {
    position: relative;
    appearance: none;
    width: 12px;
    height: 12px;
    border: 1px solid #c4c7cc;
    border-radius: 1px;
}

.check input:checked {
    border-color: var(--green);
    background: var(--green);
}

.check input:checked::after {
    content: "";
    position: absolute;
    top: 2px;
    left: 1px;
    width: 8px;
    height: 4px;
    border: solid #fff;
    border-width: 0 0 2px 2px;
    transform: rotate(-45deg);
}

.editor {
    border: 1px solid var(--line);
}

.editor-bar {
    display: flex;
    height: 23px;
    background: #f4f6f8;
    border-bottom: 1px solid #e9ebee;
}

.editor-bar button {
    display: flex;
    justify-content: center;
    align-items: center;
    width: 19px;
    color: var(--muted);
    font-size: 9px;
}

.editor-bar .icon {
    width: 9px;
    height: 9px;
}

.editor-bar .size {
    display: block;
}

.editor-bar small {
    font-size: 7px;
}

.italic {
    font-family: "Liberation Serif", serif;
    font-style: italic;
}

.underline {
    text-decoration: underline;
}

.editor textarea {
    display: block;
    width: 100%;
    height: 57px;
    resize: none;
}

.linked {
    display: flex;
    justify-content: space-between;
    align-items: center;
}

.segments {
    display: flex;
}

.segments button {
    flex: 1;
    height: 24px;
    border: 1px solid var(--line);
    margin-right: -1px;
}

.segments button:first-child {
    border-radius: 2px 0 0 2px;
}

.segments button:last-child {
    margin-right: 0;
    border-radius: 0 2px 2px 0;
}

.segments button.active {
    position: relative;
    border-color: var(--green);
    color: var(--green);
}

.width-prop {
    margin: -3px 2px 0 -2px;
}
```
